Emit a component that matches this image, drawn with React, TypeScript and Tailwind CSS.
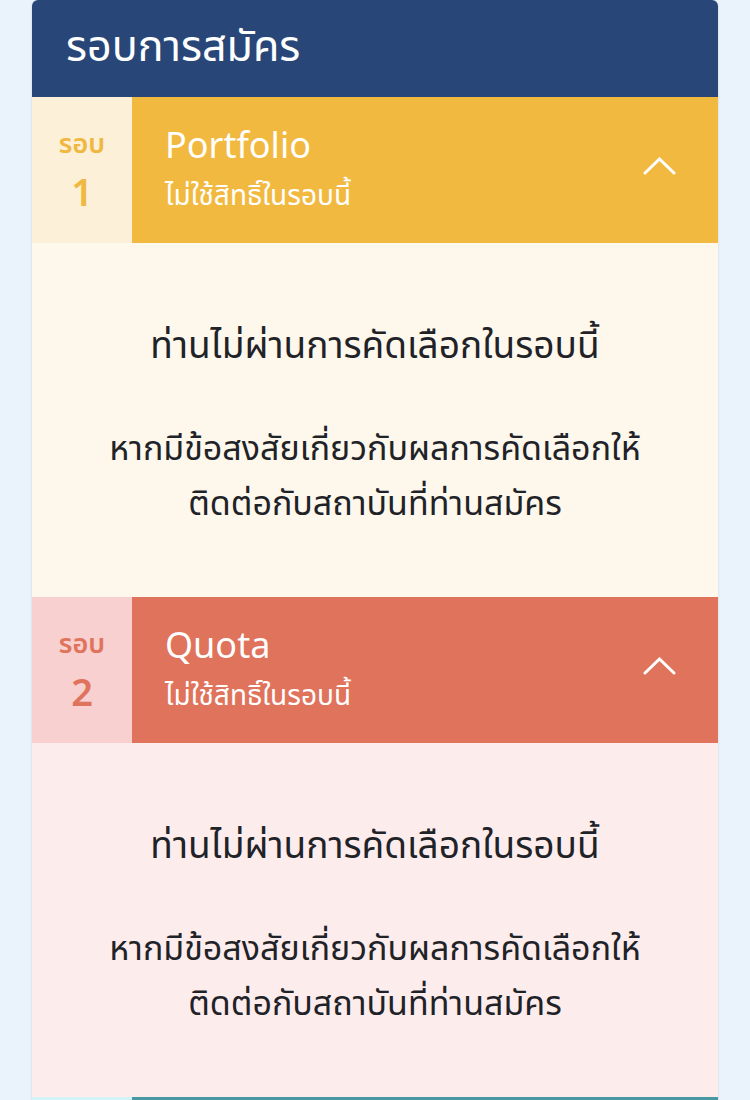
import React from 'react';

type Round = {
  no: number;
  name: string;
  status: string;
  side: string;
  sideText: string;
  head: string;
  body: string;
};

const ROUNDS: Round[] = [
  {
    no: 1,
    name: 'Portfolio',
    status: 'ไม่ใช้สิทธิ์ในรอบนี้',
    side: 'bg-[#fdf0d8]',
    sideText: 'text-[#f0b840]',
    head: 'bg-[#f2b940]',
    body: 'bg-[#fdf7ec]',
  },
  {
    no: 2,
    name: 'Quota',
    status: 'ไม่ใช้สิทธิ์ในรอบนี้',
    side: 'bg-[#f7d0cf]',
    sideText: 'text-[#e0735c]',
    head: 'bg-[#e0735c]',
    body: 'bg-[#fcecec]',
  },
];

const font = { fontFamily: '"Noto Sans Thai", "Noto Sans", "DejaVu Sans", sans-serif' };

const ChevronUp = () => (
  <svg width="33" height="18" viewBox="0 0 33 18" fill="none" stroke="white" strokeWidth="3" strokeLinecap="round" className="mb-[8px]">
    <path d="M2 16 L16.5 2 L31 16" />
  </svg>
);

const RoundBlock: React.FC<{ r: Round }> = ({ r }) => (
  <div>
    <div className={`flex h-[146px] ${r.head}`}>
      <div className={`w-[100px] flex flex-col items-center justify-center ${r.sideText} ${r.side}`}>
        <span className="text-[27px] leading-[50px] font-semibold">รอบ</span>
        <span className="text-[38px] leading-[50px] font-semibold">{r.no}</span>
      </div>
      <div className="flex-1 flex items-center justify-between pl-[33px] pr-[42px] text-white">
        <div className="flex flex-col pt-[4px]">
          <span className="text-[36px] leading-[50px]">{r.name}</span>
          <span className="text-[28px] leading-[50px]">{r.status}</span>
        </div>
        <ChevronUp />
      </div>
    </div>
    <div className={`h-[354px] flex flex-col items-center pt-[79px] text-[#1f2328] ${r.body}`}>
      <p className="text-[37px] leading-[50px]">ท่านไม่ผ่านการคัดเลือกในรอบนี้</p>
      <p className="mt-[50px] text-[34px] leading-[55px] text-center">
        หากมีข้อสงสัยเกี่ยวกับผลการคัดเลือกให้
        <br />
        ติดต่อกับสถาบันที่ท่านสมัคร
      </p>
    </div>
  </div>
);

export default function App() {
  return (
    <div className="min-h-[1100px] bg-[#eaf2fc] px-[32px]" style={font}>
      <div className="w-[686px] rounded-t-[6px] overflow-hidden shadow-sm">
        <div className="h-[97px] bg-[#284778] flex items-center pl-[34px]">
          <h1 className="text-[43px] text-white">รอบการสมัคร</h1>
        </div>
        {ROUNDS.map((r) => (
          <RoundBlock key={r.no} r={r} />
        ))}
        <div className="flex h-[146px] bg-[#4898a4]">
          <div className="w-[100px] bg-[#d4f3f7]" />
        </div>
      </div>
    </div>
  );
}
